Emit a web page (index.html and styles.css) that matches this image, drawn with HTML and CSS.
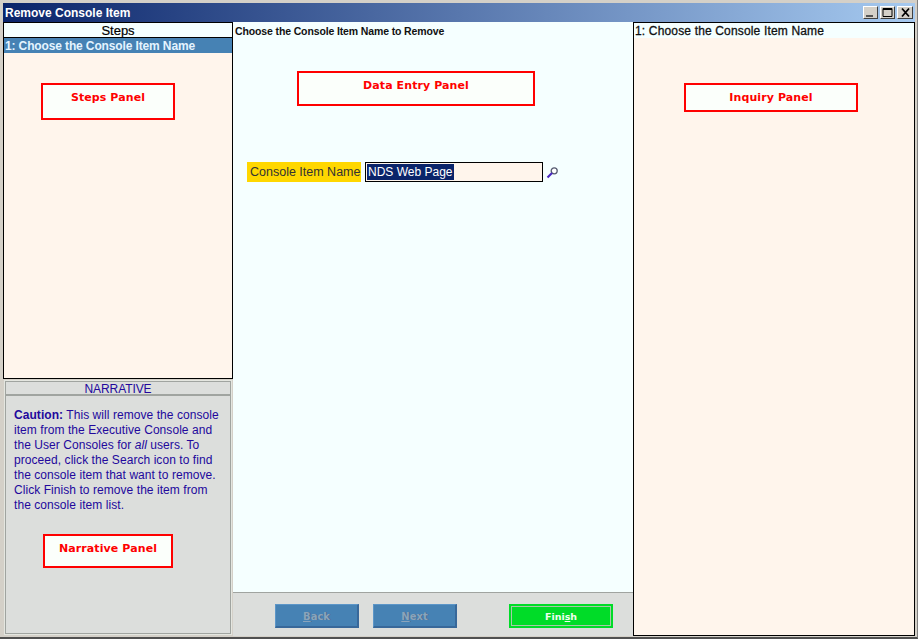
FILE: index.html
```html
<!DOCTYPE html>
<html lang="en">
<head>
<meta charset="utf-8">
<title>Remove Console Item</title>
<link rel="stylesheet" href="styles.css">
</head>
<body>
<div class="window">
  <header class="titlebar">
    <span class="title">Remove Console Item</span>
    <div class="controls">
      <span class="ctl"><svg width="13" height="11" viewBox="0 0 13 11"><rect x="2" y="8" width="7" height="2" fill="#555"/></svg></span>
      <span class="ctl"><svg width="13" height="11" viewBox="0 0 13 11"><path d="M2 1.5h9v8h-9z" fill="none" stroke="#000"/><path d="M2 2h9" stroke="#000" stroke-width="2"/></svg></span>
      <span class="ctl close"><svg width="13" height="11" viewBox="0 0 13 11"><path d="M3 1.5l7 8M10 1.5l-7 8" stroke="#000" stroke-width="1.8" fill="none"/></svg></span>
    </div>
  </header>
  <main class="body">
    <aside class="left">
      <section class="steps">
        <div class="steps-head">Steps</div>
        <div class="step-row">1: Choose the Console Item Name</div>
        <div class="callout callout-steps">Steps Panel</div>
      </section>
      <section class="narrative">
        <div class="narr-head">NARRATIVE</div>
        <p class="narr-text"><b>Caution:</b> This will remove the console item from the Executive Console and the User Consoles for <i>all</i> users. To proceed, click the Search icon to find the console item that want to remove. Click Finish to remove the item from the console item list.</p>
        <div class="callout callout-narr">Narrative Panel</div>
      </section>
    </aside>
    <section class="center">
      <div class="entry">
        <div class="entry-title">Choose the Console Item Name to Remove</div>
        <div class="callout callout-data">Data Entry Panel</div>
        <div class="field">
          <span class="field-label">Console Item Name</span>
          <span class="field-input"><span class="selected">NDS Web Page</span></span>
          <svg class="search" width="13" height="13" viewBox="0 0 13 13"><circle cx="8.2" cy="4.8" r="3" fill="#fff" stroke="#555a70" stroke-width="1.3"/><path d="M6 7L1.5 11.5" stroke="#4a28c0" stroke-width="2.2"/></svg>
        </div>
      </div>
      <footer class="actions">
        <button class="btn btn-off" type="button"><u>B</u>ack</button>
        <button class="btn btn-off" type="button"><u>N</u>ext</button>
        <button class="btn btn-finish" type="button">Fini<u>s</u>h</button>
      </footer>
    </section>
    <aside class="right">
      <div class="right-head">1: Choose the Console Item Name</div>
      <div class="callout callout-inq">Inquiry Panel</div>
    </aside>
  </main>
</div>
</body>
</html>
```
FILE: styles.css
```css
* { box-sizing: border-box; }
html, body { margin: 0; padding: 0; }
body { width: 918px; height: 639px; overflow: hidden; font-family: "Liberation Sans", Arial, sans-serif; }

.window {
  width: 918px; height: 639px;
  background: #d4d0c8;
  padding: 3px 2px 1px 3px;
  border-right: 1px solid #808080;
  border-bottom: 2px solid #505050;
  display: flex; flex-direction: column;
}
.titlebar {
  height: 19px; flex: none;
  display: flex; align-items: center; justify-content: space-between;
  background: linear-gradient(90deg, #0a246a 0%, #a6caf0 100%);
  padding: 0 2px 0 2px;
}
.title { color: #fff; font-weight: bold; font-size: 12px; }
.controls { display: flex; gap: 2px; }
.ctl {
  width: 15px; height: 13px; background: #d4d0c8; display: flex; align-items: center; justify-content: center;
  border: 1px solid; border-color: #fff #404040 #404040 #fff;
}
.ctl.close { width: 16px; }
.ctl svg { flex: none; }

.body { flex: 1; display: flex; min-height: 0; }

.left { width: 230px; flex: none; display: flex; flex-direction: column; }
.steps {
  position: relative; height: 357px; flex: none;
  background: #fff5ec; border: 1px solid #000;
}
.steps-head {
  height: 15px; background: #f5ffff; border-bottom: 1px solid #000;
  text-align: center; font-size: 13px; line-height: 16px; color: #000; -webkit-text-stroke: 0.2px #000;
}
.step-row {
  height: 15px; background: #4682b4; color: #e4f4ff;
  font-weight: bold; font-size: 12px; line-height: 17px; padding-left: 1px; letter-spacing: -0.13px;
}

.narrative {
  position: relative; flex: 1; margin: 1px 1px 1px 1px;
  background: #dcdedc; border: 2px solid #a0a4a0; border-top-width: 1px;
  outline: 1px solid #e4e6e0; outline-offset: -1px;
}
.narr-head {
  height: 15px; text-align: center; font-size: 12px; line-height: 15px; color: #22089c; letter-spacing: -0.1px;
  border: 1px solid #a0a4a0; border-width: 1px 0 2px 0; background: #dcdedc;
}
.narr-text {
  margin: 12px 9px 0 8px; font-size: 12px; line-height: 15px; color: #22089c; letter-spacing: 0.06px;
}

.center { width: 400px; flex: none; display: flex; flex-direction: column; background: #f5ffff; }
.entry { position: relative; flex: 1; }
.entry-title { font-size: 10.5px; font-weight: bold; color: #111; padding: 3px 0 0 2px; line-height: 13px; letter-spacing: -0.13px; }
.field { display: flex; align-items: center; margin: 124px 0 0 14px; height: 20px; }
.field-label {
  width: 114px; height: 20px; background: #ffd700; color: #333; font-size: 12.5px; line-height: 20px; padding-left: 3px; white-space: nowrap;
}
.field-input {
  width: 178px; height: 20px; margin-left: 4px; background: #fff5ec; border: 1px solid #000; padding: 1px; display: block;
}
.selected { display: inline-block; height: 16px; background: #0a246a; color: #fff; font-size: 12px; line-height: 16px; padding: 0 1px 0 1px; vertical-align: top; }
.search { margin-left: 3px; }

.actions {
  height: 44px; flex: none; background: #dcdedc; border-top: 1px solid #a0a4a0;
  display: flex; align-items: flex-start; padding: 11px 0 0 42px;
}
.btn {
  height: 24px; margin: 0; padding: 2px 0 0; font-family: "DejaVu Sans", sans-serif; font-size: 10px; font-weight: bold;
  border: 1px solid; cursor: default;
}
.btn-off {
  width: 84px; margin-right: 14px; background: #4682b4; color: #8aa4bc;
  border-color: #5c96c8 #38689a #38689a #5c96c8;
  border-width: 1px 2px 2px 1px;
  text-shadow: 1px 0 0 #4a6c8c;
}
.btn-finish {
  width: 104px; margin-left: 38px; padding-top: 0; background: #00dc28; color: #f0fff0; font-size: 9.5px;
  border: 2px solid #00dc28; outline: 1px solid #a8c8a8; outline-offset: -3px;
}

.right {
  position: relative; flex: 1; background: #fff5ec; border: 1px solid #000;
}
.right-head {
  height: 15px; background: #f5ffff; font-size: 12px; line-height: 17px; color: #111; padding-left: 1px;
  letter-spacing: 0.16px; -webkit-text-stroke: 0.3px #111;
}

.callout {
  position: absolute; background: #fbfffb; border: 2px solid #f00; color: #f00;
  font-family: "DejaVu Sans", sans-serif; font-weight: bold; font-size: 11px; text-align: center;
  display: flex; justify-content: center; padding-top: 6px; white-space: nowrap; letter-spacing: 0.1px;
}
.callout-steps { left: 37px; top: 60px; width: 134px; height: 37px; }
.callout-narr { left: 37px; top: 153px; width: 130px; height: 34px; }
.callout-data { left: 64px; top: 49px; width: 238px; height: 35px; }
.callout-inq { left: 50px; top: 60px; width: 174px; height: 29px; }
```
